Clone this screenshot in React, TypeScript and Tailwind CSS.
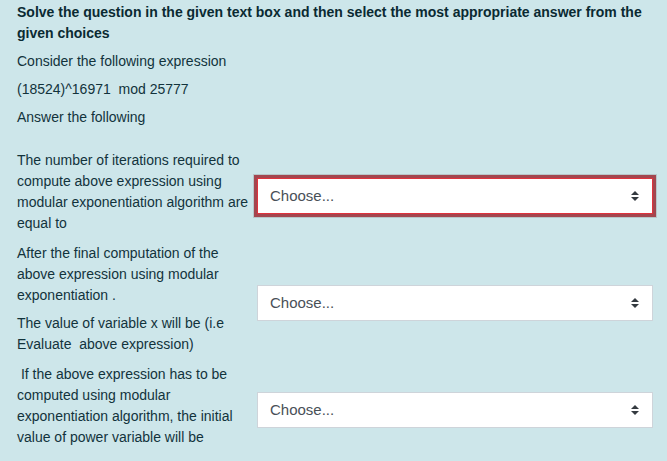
import React from "react";

function SelectBox({ invalid = false }: { invalid?: boolean }) {
  return (
    <div
      className={
        "flex h-[36px] w-[396px] items-center justify-between bg-white pl-[12px] pr-[13px] text-[15px] text-[#495057] border " +
        (invalid
          ? "border-[#e0323d] shadow-[0_0_0_3px_#a3464f,0_0_0_4px_#b9c6c9]"
          : "border-[#ced4da]")
      }
    >
      <span>Choose...</span>
      <svg width="8" height="10" viewBox="0 0 8 10" className="block">
        <polygon points="0,4 4,0 8,4" fill="#343a40" />
        <polygon points="0,6 8,6 4,10" fill="#343a40" />
      </svg>
    </div>
  );
}

export default function App() {
  return (
    <div
      className="min-h-[461px] w-[667px] bg-[#cde6ea] pl-[17px] pt-[2px] text-[14px] leading-[21px] text-[#12333c]"
      style={{ fontFamily: '"Liberation Sans", Arial, sans-serif' }}
    >
      <p className="mb-[7px] font-bold text-[#0a2a32]">
        Solve the question in the given text box and then select the most appropriate answer from the given choices
      </p>
      <p className="mb-[7px]">Consider the following expression</p>
      <p className="mb-[7px] whitespace-pre">(18524)^16971  mod 25777</p>
      <p className="mb-[7px]">Answer the following</p>

      <div className="mt-[21px] grid grid-cols-[236px_396px] gap-x-[4px]">
        <div className="py-[1px]">
          <p className="mb-[7px]">
            The number of iterations required to compute above expression using modular exponentiation algorithm are equal to
          </p>
        </div>
        <div className="flex items-center">
          <SelectBox invalid />
        </div>

        <div className="py-[1px]">
          <p className="mb-[7px]">
            After the final computation of the above expression using modular exponentiation .
          </p>
          <p className="mb-[7px] whitespace-pre-wrap">
            The value of variable x will be (i.e Evaluate  above expression)
          </p>
        </div>
        <div className="flex items-center">
          <SelectBox />
        </div>

        <div className="py-[1px]">
          <p className="mb-[7px]">
            {"\u00a0"}If the above expression has to be computed using modular exponentiation algorithm, the initial value of power variable will be
          </p>
        </div>
        <div className="flex items-center">
          <SelectBox />
        </div>
      </div>
    </div>
  );
}
